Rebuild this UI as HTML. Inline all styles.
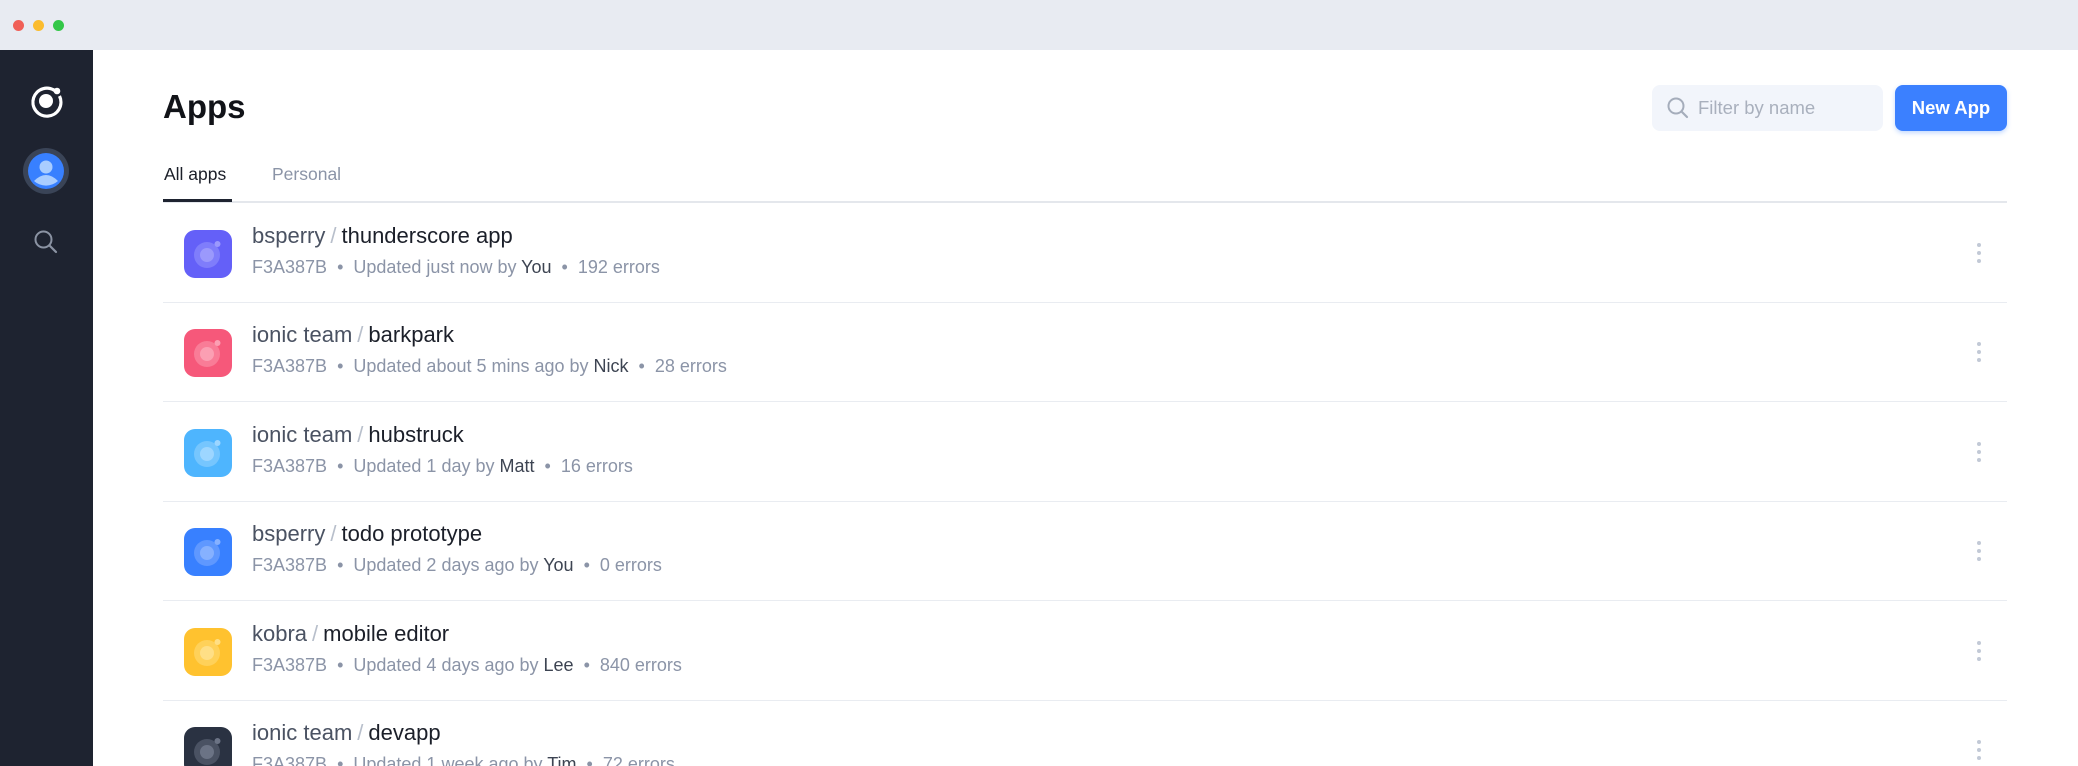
<!DOCTYPE html>
<html style="width:2078px;height:766px;overflow:hidden"><head><meta charset="utf-8"><style>
*{margin:0;padding:0;box-sizing:border-box}
body{width:2078px;height:766px;overflow:hidden;background:#fff;font-family:"Liberation Sans",sans-serif;position:relative}
.tb{position:absolute;left:0;top:0;width:2078px;height:50px;background:#e8ebf2}
.dot{position:absolute;top:20px;width:11px;height:11px;border-radius:50%}
.sb{position:absolute;left:0;top:50px;width:93px;height:716px;background:#1e2330}
.abs{position:absolute}
.row{position:absolute;left:163px;width:1844px;height:100px;border-bottom:1.5px solid #e9ecf1}
.ic{position:absolute;left:21px;top:27px;width:48px;height:48px;border-radius:11px}
.t{position:absolute;left:89px;top:20px;font-size:22px;color:#1b1f29;white-space:nowrap}
.t .o{color:#4a5262}.t .s{color:#b8bfcb;margin:0 5px}
.st{position:absolute;left:89px;top:54px;font-size:18px;color:#8b94a7;white-space:nowrap}
.st b{font-weight:normal;color:#3d4452}.st i{font-style:normal;margin:0 10px}
.kb{position:absolute;left:1814px;top:40px;width:5px;height:20px}
.kb span{display:block;width:4px;height:4px;border-radius:50%;background:#c2c9d6;margin-bottom:4px}
</style></head><body>
<div class="tb"></div>
<div class="dot" style="left:13px;background:#f05f57"></div>
<div class="dot" style="left:33px;background:#fbbc2e"></div>
<div class="dot" style="left:53px;background:#33c748"></div>
<div class="sb"></div>
<svg class="abs" style="left:28px;top:83px" width="36" height="36" viewBox="0 0 36 36"><path d="M28 8.5 A14 14 0 1 0 31.5 13" fill="none" stroke="#fff" stroke-width="3.2"/><circle cx="18" cy="18" r="7" fill="#fff"/><circle cx="29" cy="8" r="3.3" fill="#fff"/></svg>
<svg class="abs" style="left:22px;top:147px" width="48" height="48" viewBox="0 0 48 48"><circle cx="24" cy="24" r="23" fill="#3a4457"/><circle cx="24" cy="24" r="18" fill="#3880ff"/><circle cx="24" cy="20" r="6.5" fill="#a9cdff"/><path d="M12 34 Q24 22 36 34 A18 18 0 0 1 12 34Z" fill="#a9cdff"/></svg>
<svg class="abs" style="left:33px;top:229px" width="26" height="26" viewBox="0 0 26 26"><circle cx="10.5" cy="10.5" r="8" fill="none" stroke="#8b93a3" stroke-width="2"/><path d="M16.5 16.5 L23 23" stroke="#8b93a3" stroke-width="2.2" stroke-linecap="round"/></svg>
<div class="abs" style="left:163px;top:88px;font-size:33px;font-weight:bold;color:#111318">Apps</div>
<div class="abs" style="left:164px;top:164px;font-size:17.5px;color:#1b1f29">All apps</div>
<div class="abs" style="left:272px;top:164px;font-size:17.5px;color:#8b94a7">Personal</div>
<div class="abs" style="left:163px;top:201px;width:1844px;height:2px;background:#e4e7ec"></div>
<div class="abs" style="left:163px;top:199px;width:69px;height:3px;background:#1e2330"></div>
<div class="abs" style="left:1652px;top:85px;width:231px;height:46px;border-radius:8px;background:#f2f5fb"></div>
<svg class="abs" style="left:1666px;top:96px" width="24" height="24" viewBox="0 0 24 24"><circle cx="10" cy="10" r="7.5" fill="none" stroke="#a5adbb" stroke-width="2"/><path d="M15.5 15.5 L21 21" stroke="#a5adbb" stroke-width="2.2" stroke-linecap="round"/></svg>
<div class="abs" style="left:1698px;top:97px;font-size:18.5px;color:#a9b0bd">Filter by name</div>
<div class="abs" style="left:1895px;top:85px;width:112px;height:46px;border-radius:8px;background:#3b80ff;box-shadow:0 2px 5px rgba(56,128,255,.3);color:#fff;font-weight:bold;font-size:18.5px;text-align:center;line-height:46px">New App</div>

<div class="row" style="top:203px"><svg class="ic" viewBox="0 0 48 48" style="background:#6460f8"><circle cx="23" cy="25" r="13" fill="#7f7dfb"/><circle cx="23" cy="25" r="7" fill="#9b99fc"/><circle cx="33.5" cy="14" r="3" fill="#9b99fc"/></svg><div class="t"><span class="o">bsperry</span><span class="s">/</span>thunderscore app</div><div class="st">F3A387B<i>•</i>Updated just now by <b>You</b><i>•</i>192 errors</div><div class="kb"><span></span><span></span><span></span></div></div>
<div class="row" style="top:302px"><svg class="ic" viewBox="0 0 48 48" style="background:#f6587a"><circle cx="23" cy="25" r="13" fill="#f97c97"/><circle cx="23" cy="25" r="7" fill="#fb9fb3"/><circle cx="33.5" cy="14" r="3" fill="#fb9fb3"/></svg><div class="t"><span class="o">ionic team</span><span class="s">/</span>barkpark</div><div class="st">F3A387B<i>•</i>Updated about 5 mins ago by <b>Nick</b><i>•</i>28 errors</div><div class="kb"><span></span><span></span><span></span></div></div>
<div class="row" style="top:402px"><svg class="ic" viewBox="0 0 48 48" style="background:#4eb5fe"><circle cx="23" cy="25" r="13" fill="#76c6fe"/><circle cx="23" cy="25" r="7" fill="#9dd6ff"/><circle cx="33.5" cy="14" r="3" fill="#9dd6ff"/></svg><div class="t"><span class="o">ionic team</span><span class="s">/</span>hubstruck</div><div class="st">F3A387B<i>•</i>Updated 1 day by <b>Matt</b><i>•</i>16 errors</div><div class="kb"><span></span><span></span><span></span></div></div>
<div class="row" style="top:501px"><svg class="ic" viewBox="0 0 48 48" style="background:#3880ff"><circle cx="23" cy="25" r="13" fill="#5f98ff"/><circle cx="23" cy="25" r="7" fill="#86b1ff"/><circle cx="33.5" cy="14" r="3" fill="#86b1ff"/></svg><div class="t"><span class="o">bsperry</span><span class="s">/</span>todo prototype</div><div class="st">F3A387B<i>•</i>Updated 2 days ago by <b>You</b><i>•</i>0 errors</div><div class="kb"><span></span><span></span><span></span></div></div>
<div class="row" style="top:601px"><svg class="ic" viewBox="0 0 48 48" style="background:#ffc22f"><circle cx="23" cy="25" r="13" fill="#ffd159"/><circle cx="23" cy="25" r="7" fill="#ffdf86"/><circle cx="33.5" cy="14" r="3" fill="#ffdf86"/></svg><div class="t"><span class="o">kobra</span><span class="s">/</span>mobile editor</div><div class="st">F3A387B<i>•</i>Updated 4 days ago by <b>Lee</b><i>•</i>840 errors</div><div class="kb"><span></span><span></span><span></span></div></div>
<div class="row" style="top:700px;height:66px;border:none;overflow:hidden"><svg class="ic" viewBox="0 0 48 48" style="background:#2a3242"><circle cx="23" cy="25" r="13" fill="#4a5263"/><circle cx="23" cy="25" r="7" fill="#6b7385"/><circle cx="33.5" cy="14" r="3" fill="#6b7385"/></svg><div class="t"><span class="o">ionic team</span><span class="s">/</span>devapp</div><div class="st">F3A387B<i>•</i>Updated 1 week ago by <b>Tim</b><i>•</i>72 errors</div><div class="kb"><span></span><span></span><span></span></div></div>
</body></html>
